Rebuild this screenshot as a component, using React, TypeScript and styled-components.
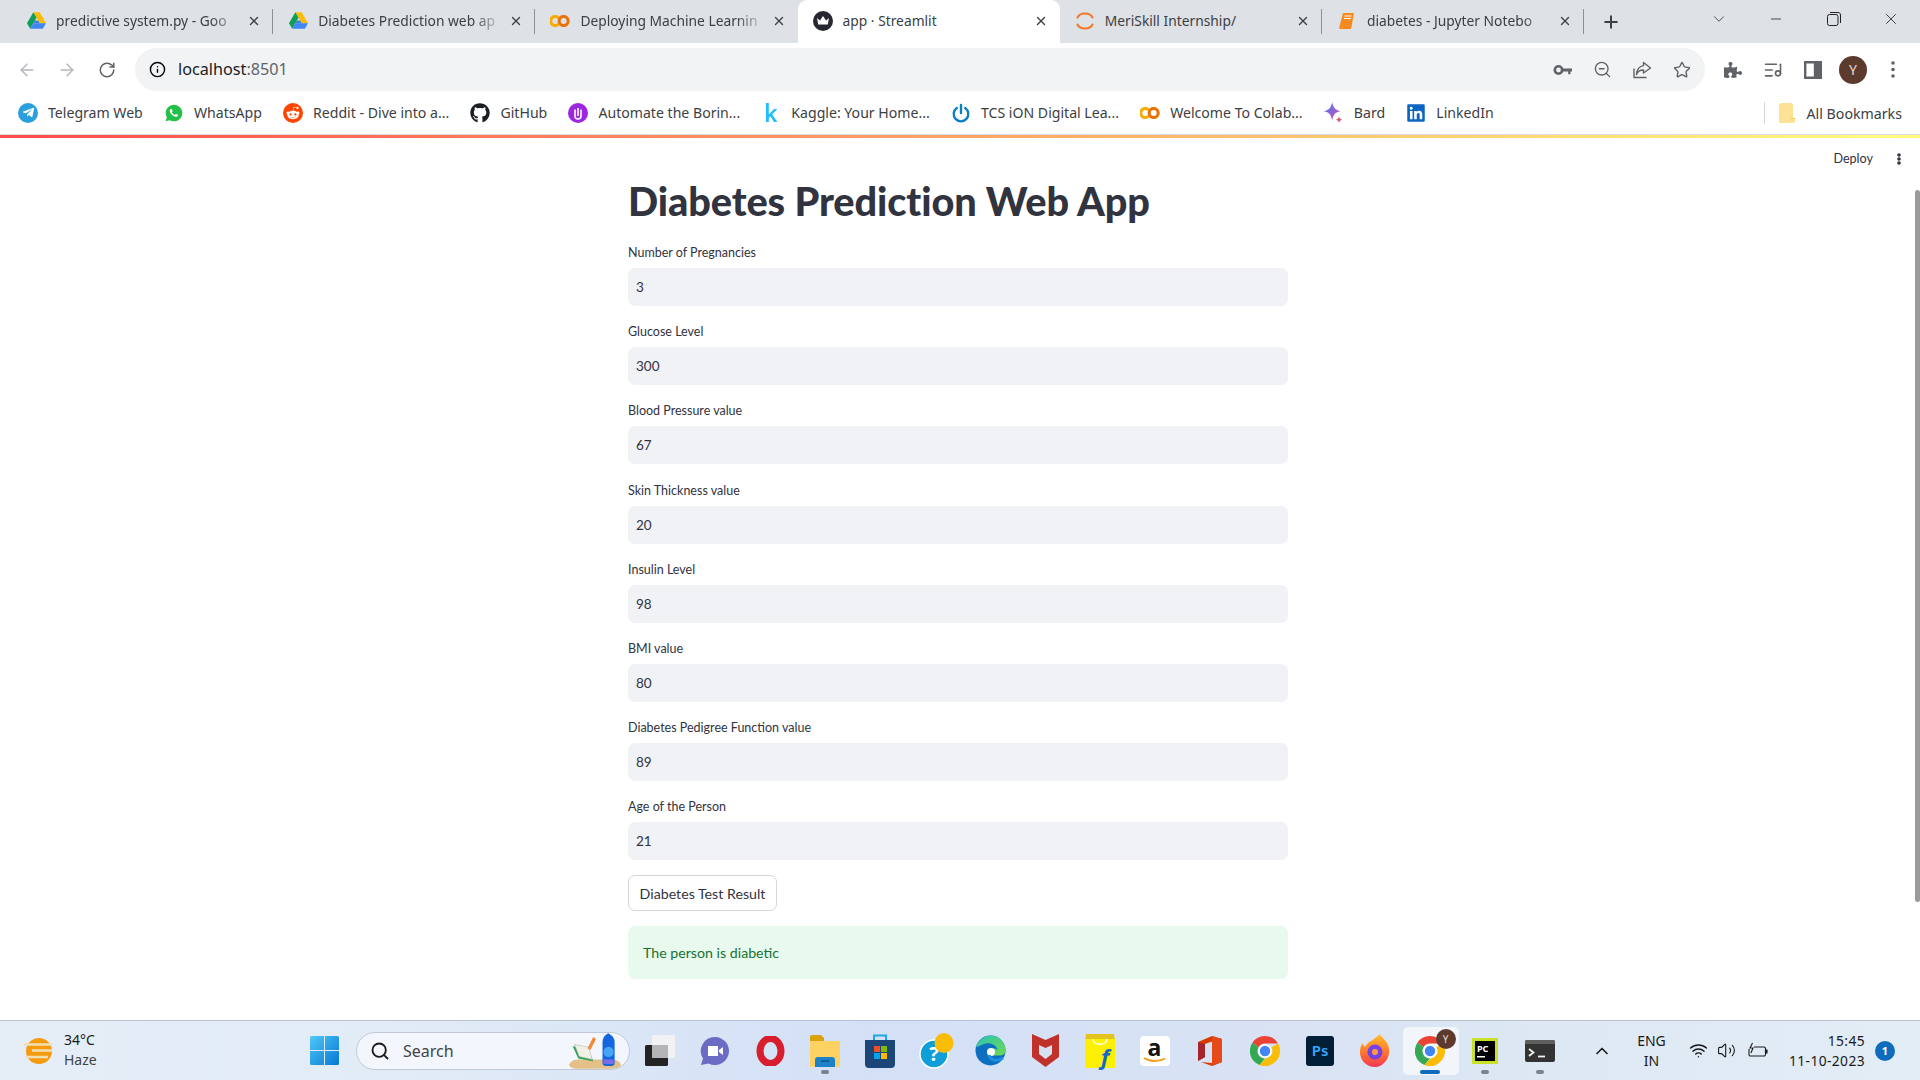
import React, { FC, ReactNode } from 'react';
import styled, { createGlobalStyle } from 'styled-components';
import { ArrowLeft, ArrowRight, Info, ListMusic, RotateCw, Search, Star, Volume2, Wifi, X, ZoomOut, ChevronDown, ChevronUp, Minus, Plus } from 'lucide-react';
import { FaGithub, FaLinkedin, FaPuzzlePiece, FaRedditAlien, FaTelegramPlane } from 'react-icons/fa';
import { RiWhatsappFill } from 'react-icons/ri';

const uiFont = `"Noto Sans", "Open Sans", sans-serif`;
const appFont = `"Lato", "Noto Sans", sans-serif`;

const GlobalStyle = createGlobalStyle`
  html, body { margin: 0; padding: 0; background: #fff; overflow: hidden; }
  * { box-sizing: border-box; }
  body { font-family: ${uiFont}; }
`;

/* favicons and small drawings */
const Drive = () => (
  <svg width="19" height="17" viewBox="0 0 24 21">
    <path d="M8 0h8l8 14h-8z" fill="#fbbc04" />
    <path d="M8 0l4 7-8 14-4-7z" fill="#0f9d58" />
    <path d="M4 21l4-7h16l-4 7z" fill="#4285f4" />
    <path d="M8 14h8l-2-3.5h-4z" fill="#3b7de0" />
  </svg>
);

const Colab = ({ size = 20 }: { size?: number }) => (
  <svg width={size} height={size * 0.6} viewBox="0 0 30 18" fill="none" strokeWidth="4.6">
    <path d="M13 4.5A6.8 6.8 0 1 0 13 13.5" stroke="#f9ab00" />
    <circle cx="20.5" cy="9" r="6.8" stroke="#e8710a" />
  </svg>
);

const Crown = () => (
  <svg width="20" height="20" viewBox="0 0 20 20">
    <circle cx="10" cy="10" r="10" fill="#262730" />
    <path d="M4 7l3 2.4L10 5l3 4.4L16 7l-1.2 6.5H5.2z" fill="#fff" />
  </svg>
);

const Spinner = () => (
  <svg width="20" height="20" viewBox="0 0 20 20" fill="none" stroke="#f37726" strokeWidth="2" strokeLinecap="round">
    <path d="M2.5 6.5C5 1.2 15 1.2 17.5 6.5" />
    <path d="M2.5 13.5C5 18.8 15 18.8 17.5 13.5" />
  </svg>
);

const Notebook = () => (
  <svg width="18" height="18" viewBox="0 0 18 18">
    <path d="M5 1h11l-2.6 14.5c-.1.8-.7 1.5-1.6 1.5H2.5c-1 0-1.4-.8-1.3-1.6z" fill="#f68a1e" />
    <path d="M6.5 4h7M6 6.5h7" stroke="#fff" strokeWidth="1" />
  </svg>
);

const Key = () => (
  <svg width="19" height="12" viewBox="0 0 19 12" fill="none">
    <circle cx="5.5" cy="6" r="3.7" stroke="#5f6368" strokeWidth="2.6" />
    <path d="M9 4.6h10v3h-1.6v2.6h-2.2V7.6H9z" fill="#5f6368" />
  </svg>
);

const ShareBox = () => (
  <svg width="20" height="20" viewBox="0 0 20 20" fill="none" stroke="#5f6368" strokeWidth="1.4" strokeLinejoin="round">
    <path d="M2 8.5V17.5H14.5" />
    <path d="M11.5 2.5L18.5 8 11.5 13V10C8 10 5.5 11.5 4.5 14.5 4.5 9.5 7.5 6 11.5 5.6z" />
  </svg>
);

const SidePanel = () => (
  <svg width="18" height="18" viewBox="0 0 18 18">
    <path d="M0 0h18v18H0zM2.4 2.4v13.2h7.4V2.4z" fill="#5f6368" fillRule="evenodd" />
  </svg>
);

const Dots = ({ color = '#5f6368', gap = 6.5 }: { color?: string; gap?: number }) => (
  <svg width="4" height={gap * 2 + 4} viewBox={`0 0 4 ${gap * 2 + 4}`} fill={color}>
    <circle cx="2" cy="2" r="1.8" />
    <circle cx="2" cy={gap + 2} r="1.8" />
    <circle cx="2" cy={gap * 2 + 2} r="1.8" />
  </svg>
);

const Restore = () => (
  <svg width="14" height="14" viewBox="0 0 14 14" fill="none" stroke="#202124" strokeWidth="1">
    <rect x="0.5" y="2.5" width="10.5" height="11" rx="2" />
    <path d="M3 .5h8c1.5 0 2.5 1 2.5 2.5v8" />
  </svg>
);

const KaggleK = () => (
  <svg width="11" height="19" viewBox="0 0 11 19">
    <path d="M0 0h2.8v11.4L8 6h3.4L6.2 11.2 11.4 19H8L4.3 13.2 2.8 14.7V19H0z" fill="#20beff" />
  </svg>
);

const PowerIcon = () => (
  <svg width="22" height="22" viewBox="0 0 22 22" fill="none" stroke="#0a7fc4" strokeWidth="2.6" strokeLinecap="round">
    <path d="M6.4 5.6a8 8 0 1 0 9.2 0" />
    <path d="M11 2v9" />
  </svg>
);

const Bard = () => (
  <svg width="22" height="24" viewBox="0 0 22 24">
    <defs>
      <linearGradient id="bardg" x1="0" y1="0" x2="1" y2="1">
        <stop offset="0" stopColor="#3f7ff0" />
        <stop offset="0.6" stopColor="#9b5fd0" />
        <stop offset="1" stopColor="#d9566a" />
      </linearGradient>
    </defs>
    <path d="M9 0c1 6 3.500 9 9 10-5.500 1-8 4-9 10-1-6-3.500-9-9-10 5.500-1 8-4 9-10z" fill="url(#bardg)" />
    <path d="M16.500 15.500c.4 2.300 1.300 3.300 3.500 3.800-2.200.5-3.100 1.500-3.500 3.800-.4-2.300-1.300-3.300-3.500-3.800 2.200-.5 3.100-1.500 3.500-3.800z" fill="#d9566a" />
  </svg>
);

const UploadBadge = () => (
  <svg width="20" height="20" viewBox="0 0 20 20" fill="none">
    <circle cx="10" cy="10" r="10" fill="#9d27e0" />
    <path d="M7 6.500v6.500a3 3 0 0 0 6 0V6.500M10 5v8" stroke="#fff" strokeWidth="1.6" />
  </svg>
);

const FolderBookmark = () => (
  <svg width="16" height="20" viewBox="0 0 16 20">
    <path d="M2 0h10c1 0 2 1 2 2v13h2v3c0 1-1 2-2 2H2c-1 0-2-1-2-2V2c0-1 1-2 2-2z" fill="#fde293" />
    <path d="M12 15.500h4" stroke="#f5c84c" strokeWidth="1" />
  </svg>
);

const Weather = () => (
  <svg width="32" height="36" viewBox="0 0 32 36">
    <circle cx="16" cy="18" r="13" fill="#f69a0e" />
    <path d="M1 11.500h28M3 24h22M9 17.500h20" stroke="#f1dfb4" strokeWidth="2.400" />
  </svg>
);

const WindowsLogo = () => (
  <svg width="29" height="29" viewBox="0 0 29 29">
    <defs>
      <linearGradient id="wing" x1="0" y1="0" x2="1" y2="1">
        <stop offset="0" stopColor="#50c8f8" />
        <stop offset="1" stopColor="#0478d4" />
      </linearGradient>
    </defs>
    <path d="M0 1.500Q0 0 1.500 0H14v14H0zM15 0h12.500Q29 0 29 1.500V14H15zM0 15h14v14H1.500Q0 29 0 27.500zM15 15h14v12.500Q29 29 27.500 29H15z" fill="url(#wing)" />
  </svg>
);

const SearchArt = () => (
  <svg width="54" height="36" viewBox="0 0 58 38">
    <path d="M0 34q2-6 10-6h36q8 0 10 6-3 4-10 4H8q-6 0-8-4z" fill="#e3c089" />
    <path d="M4 14l16 2 6 14-16-3z" fill="#2f9e58" />
    <path d="M6 12l15 3 4 13-14-3z" fill="#f2f0e4" stroke="#a9b5a9" strokeWidth=".6" />
    <path d="M20 16L26 4l3 2-6 12z" fill="#f08a34" />
    <path d="M36 10q0-7 6-10 7 3 7 10v22q0 3-3 3h-7q-3 0-3-3z" fill="#1565e0" />
    <circle cx="42.500" cy="20" r="5.500" fill="#46a6f5" />
    <path d="M37 28h11v5H37z" fill="#7a6de8" />
  </svg>
);

const TaskView = () => (
  <svg width="30" height="31" viewBox="0 0 30 31">
    <rect x="7" y="0" width="23" height="23" rx="1.500" fill="#f2f2f4" />
    <rect x="0" y="10" width="23" height="21" rx="1.500" fill="#232323" />
    <rect x="7" y="10" width="16" height="13" fill="#b5b5b7" />
  </svg>
);

const Meet = () => (
  <svg width="30" height="30" viewBox="0 0 30 30">
    <path d="M15 1a14 14 0 1 1-6.500 26.400L1 29l2-6.500A14 14 0 0 1 15 1z" fill="#6d6cc4" />
    <path d="M8 10h10v10H8z" fill="#fff" />
    <path d="M19 14l4-3v8l-4-3z" fill="#fff" />
  </svg>
);

const Opera = () => (
  <svg width="29" height="30" viewBox="0 0 29 30" fill="none">
    <ellipse cx="14.500" cy="15" rx="10.500" ry="12.500" stroke="#d81e2d" strokeWidth="7" />
  </svg>
);

const Explorer = () => (
  <svg width="30" height="32" viewBox="0 0 30 32">
    <path d="M0 2q0-2 2-2h9l3 3v5H0z" fill="#dca20b" />
    <path d="M0 6h30v26H0z" fill="#fcd262" />
    <path d="M5 25q0-3 3-3h14q3 0 3 3v7H5z" fill="#1b82c9" />
    <path d="M11 26h8" stroke="#0b4f86" strokeWidth="1.400" />
  </svg>
);

const Store = () => (
  <svg width="30" height="34" viewBox="0 0 30 34" fill="none">
    <path d="M9 6V1.500h12V6" stroke="#1ea7e8" strokeWidth="2" />
    <path d="M0 6h30v24q0 4-4 4H4q-4 0-4-4z" fill="#1d4678" />
    <path d="M9 12h6v6H9z" fill="#f25022" />
    <path d="M16 12h6v6h-6z" fill="#7fba00" />
    <path d="M9 19h6v6H9z" fill="#00a4ef" />
    <path d="M16 19h6v6h-6z" fill="#ffb900" />
  </svg>
);

const Help = () => (
  <svg width="36" height="36" viewBox="-2 0 36 36" overflow="visible">
    <circle cx="15" cy="21" r="14" fill="#0e9ed8" stroke="#fff" strokeWidth="1.500" />
    <text x="15" y="28" textAnchor="middle" fontSize="20" fontWeight="700" fontFamily="Noto Sans, sans-serif" fill="#fff">?</text>
    <ellipse cx="25" cy="10" rx="9.500" ry="10" fill="#fbbc05" />
  </svg>
);

const Edge = () => (
  <svg width="31" height="31" viewBox="0 0 31 31">
    <defs>
      <linearGradient id="edgeg" x1="0" y1="0" x2="1" y2="1">
        <stop offset="0" stopColor="#2bc4b8" />
        <stop offset="1" stopColor="#6fd84e" />
      </linearGradient>
    </defs>
    <circle cx="15.500" cy="15.500" r="15" fill="#0c6fc0" />
    <path d="M1 12C4 3 12 .5 15.500.5 24 .5 30.500 7 30.500 15.500c0 3-2.500 5-6 5H14c-2-3 1-7 5-7 2 0 3 .5 4 1.500C21 9 14 7 9 9 5 10.500 3 12 1 12z" fill="url(#edgeg)" />
    <circle cx="16" cy="17" r="4" fill="#fff" />
    <path d="M14 20c1 5 7 7 14 3" stroke="#1e90e0" strokeWidth="3" fill="none" />
  </svg>
);

const McAfee = () => (
  <svg width="27" height="33" viewBox="0 0 27 33">
    <path d="M0 0l13.500 6L27 0v23L13.500 33 0 23z" fill="#c0312b" />
    <path d="M7 11l6.500 3 6.500-3v9l-6.500 5L7 20z" fill="#d6e0f3" />
  </svg>
);

const Flipkart = () => (
  <svg width="30" height="34" viewBox="0 0 30 34" overflow="visible">
    <path d="M1 0h28l1 6H0z" fill="#e3c31e" />
    <path d="M0 5h30v29H0z" fill="#fdf000" />
    <path d="M8 5c0 7 14 7 14 0" stroke="#fff" strokeWidth="1.400" fill="none" />
    <text x="20" y="31" textAnchor="middle" fontSize="22" fontWeight="700" fontStyle="italic" fontFamily="Noto Sans, sans-serif" fill="#1467cc">f</text>
  </svg>
);

const Amazon = () => (
  <svg width="30" height="30" viewBox="0 0 30 30" overflow="visible">
    <rect width="30" height="30" rx="4" fill="#fff" />
    <text x="14.500" y="20" textAnchor="middle" fontSize="23" fontWeight="700" fontFamily="Noto Sans, sans-serif" fill="#111">a</text>
    <path d="M4 22c6 4 15 4 21 .5" stroke="#f79c1d" strokeWidth="2" fill="none" />
  </svg>
);

const Office = () => (
  <svg width="24" height="30" viewBox="0 0 24 30">
    <path d="M0 6L14 0l10 3v23l-10 4-11-4 11 1V5.500L7 8v13l-7 4z" fill="#d83b01" />
    <path d="M0 6l7 2v13l-7 4z" fill="#a4262c" />
    <path d="M14 0l10 3v23l-10 4z" fill="#e64a19" />
  </svg>
);

const Chrome = ({ size = 30 }: { size?: number }) => (
  <svg width={size} height={size} viewBox="0 0 30 30">
    <path d="M15 0a15 15 0 0 1 13 7.500H15a7.500 7.500 0 0 0-6.500 3.700L2.500 6.500A15 15 0 0 1 15 0z" fill="#ea4335" />
    <path d="M2.500 6.500l6 4.700A7.500 7.500 0 0 0 15 22.500L9.500 29A15 15 0 0 1 2.500 6.500z" fill="#34a853" />
    <path d="M28 7.500A15 15 0 0 1 9.500 29l6-6.500A7.500 7.500 0 0 0 21.500 11.200L28 7.500z" fill="#fbbc04" />
    <circle cx="15" cy="15" r="6" fill="#4285f4" stroke="#fff" strokeWidth="1.600" />
  </svg>
);

const Photoshop = () => (
  <svg width="28" height="30" viewBox="0 0 28 30">
    <rect width="28" height="30" rx="3" fill="#001e36" />
    <text x="14" y="20" textAnchor="middle" fontSize="15" fontWeight="600" fontFamily="Noto Sans, sans-serif" fill="#31a8ff">Ps</text>
  </svg>
);

const Firefox = () => (
  <svg width="30" height="33" viewBox="0 0 30 33">
    <defs>
      <linearGradient id="foxg" x1="0" y1="0" x2="0" y2="1">
        <stop offset="0" stopColor="#ffc02e" />
        <stop offset="0.6" stopColor="#ff6f2c" />
        <stop offset="1" stopColor="#f2375a" />
      </linearGradient>
    </defs>
    <path d="M20 0c1 3 6 6 8 11 4 10-3 22-13 22C6 33 0 26 0 18c0-4 1-7 3-9 0 2 1 3 2 4 2-5 9-7 15-13z" fill="url(#foxg)" />
    <circle cx="15" cy="18" r="7.500" fill="#7542e5" />
    <circle cx="15" cy="18" r="3" fill="#ff9d3c" />
  </svg>
);

const PyCharm = () => (
  <svg width="26" height="26" viewBox="0 0 26 26">
    <rect width="26" height="26" fill="#c9e12a" />
    <rect x="3" y="3" width="20" height="20" fill="#000" />
    <text x="5" y="14" fontSize="9" fontWeight="700" fontFamily="Noto Sans, sans-serif" fill="#fff">PC</text>
    <rect x="5" y="18" width="8" height="1.500" fill="#fff" />
  </svg>
);

const Terminal = () => (
  <svg width="30" height="22" viewBox="0 0 30 22" fill="none">
    <rect width="30" height="22" rx="2" fill="#333" />
    <path d="M0 2q0-2 2-2h26q2 0 2 2v2H0z" fill="#5e5e5e" />
    <path d="M4 9l4.500 3.500L4 16" stroke="#f2f2f2" strokeWidth="1.800" />
    <path d="M13 16.500h7" stroke="#f2f2f2" strokeWidth="1.800" />
  </svg>
);

const BatteryCharge = () => (
  <svg width="20" height="18" viewBox="0 0 20 18" fill="none" stroke="#1a1a1a" strokeWidth="1.100">
    <path d="M6 5h10a1.500 1.500 0 0 1 1.500 1.500v6A1.500 1.500 0 0 1 16 14H2.500A1.500 1.500 0 0 1 1 12.500V7" />
    <path d="M17.500 8h1.500v3h-1.500z" fill="#1a1a1a" />
    <path d="M4.500 1L2 6h3l-2 5" />
  </svg>
);

/* browser tabs */
const TabStrip = styled.div`
  display: flex;
  align-items: stretch;
  height: 43px;
  padding-left: 11px;
  background: #dee1e6;
`;

const Tab = styled.div<{ $active?: boolean; $divider?: boolean }>`
  position: relative;
  display: flex;
  align-items: center;
  width: 262.2px;
  padding: 0 12px 2px 15px;
  color: #3c4043;
  background: ${({ $active }) => ($active ? '#fff' : 'transparent')};
  border-radius: ${({ $active }) => ($active ? '9px 9px 0 0' : '0')};

  ${({ $divider }) => $divider && `
    &::after {
      content: '';
      position: absolute;
      right: 0;
      top: 9px;
      height: 25px;
      width: 1px;
      background: #8e9094;
    }
  `}
`;

const TabIcon = styled.span`
  display: flex;
  align-items: center;
  justify-content: center;
  width: 20px;
  margin-right: 10px;
  flex-shrink: 0;
`;

const TabTitle = styled.span<{ $fade?: boolean }>`
  flex: 1;
  min-width: 0;
  overflow: hidden;
  white-space: nowrap;
  font-size: 13.8px;
  ${({ $fade }) => $fade && `mask-image: linear-gradient(to right, #000 84%, transparent 100%);`}
`;

const TabClose = styled.span`
  display: flex;
  margin-left: 6px;
  color: #3c4043;
`;

const NewTab = styled.div`
  display: flex;
  align-items: center;
  margin-left: 17px;
  color: #3c4043;
`;

const WindowControls = styled.div`
  display: flex;
  margin-left: auto;
`;

const WindowButton = styled.div`
  display: flex;
  align-items: center;
  justify-content: center;
  width: 57.500px;
  height: 38px;
  color: #202124;
`;

/* address bar */
const Toolbar = styled.div`
  display: flex;
  align-items: center;
  height: 49px;
  padding: 5px 0 1px 7px;
  background: #fff;
`;

const IconSlot = styled.div`
  display: flex;
  align-items: center;
  justify-content: center;
  width: 40px;
  height: 40px;
  color: #5f6368;
  flex-shrink: 0;
`;

const AddressBar = styled.div`
  display: flex;
  align-items: center;
  width: 1570px;
  height: 43px;
  margin-left: 8px;
  padding: 0 3px 0 14px;
  background: #f1f3f4;
  border-radius: 22px;
`;

const Url = styled.div`
  flex: 1;
  margin-left: 12px;
  padding-bottom: 1px;
  font-size: 16.200px;
  color: #202124;

  span {
    color: #5f6368;
  }
`;

const Extensions = styled.div`
  display: flex;
  align-items: center;
  margin-left: 8px;
`;

const Avatar = styled.div<{ $size: number; $font: number }>`
  display: flex;
  align-items: center;
  justify-content: center;
  width: ${({ $size }) => $size}px;
  height: ${({ $size }) => $size}px;
  border-radius: 50%;
  background: #5d3a2e;
  color: #e8dcd6;
  font-size: ${({ $font }) => $font}px;
`;

/* bookmarks */
const BookmarkBar = styled.div`
  display: flex;
  align-items: center;
  gap: 21.200px;
  height: 43px;
  padding: 0 18px;
  background: #fff;
  border-bottom: 1px solid #dadce0;
`;

const Bookmark = styled.div`
  display: flex;
  align-items: center;
  gap: 10px;
  font-size: 14.100px;
  color: #3c4043;
  white-space: nowrap;
  padding-bottom: 1px;
`;

const BookmarkIcon = styled.span<{ $color?: string; $round?: boolean }>`
  display: flex;
  align-items: center;
  justify-content: center;
  width: 20px;
  height: 20px;
  flex-shrink: 0;
  border-radius: ${({ $round }) => ($round ? '50%' : '2px')};
  background: ${({ $color }) => $color || 'transparent'};
  color: #fff;
`;

const AllBookmarks = styled.div`
  display: flex;
  align-items: center;
  height: 22px;
  margin-left: auto;
  padding-left: 14px;
  gap: 12px;
  border-left: 1px solid #d5d7da;
  font-size: 14.200px;
  color: #3c4043;
`;

const Decoration = styled.div`
  height: 3px;
  background: linear-gradient(90deg, #ff4b4b, #fffd80);
`;

/* streamlit page */
const Page = styled.main`
  position: relative;
  height: 882px;
  padding-right: 4px;
  background: #fff;
  font-family: ${appFont};
  color: #31333f;
`;

const AppHeader = styled.div`
  position: absolute;
  top: 13px;
  right: 19px;
  display: flex;
  align-items: center;
  gap: 24px;
  font-size: 12.600px;
`;

const ScrollThumb = styled.div`
  position: absolute;
  right: 0;
  top: 52px;
  width: 5px;
  height: 712px;
  background: #9b9b9b;
  border-radius: 3px;
`;

const Content = styled.div`
  display: flex;
  flex-direction: column;
  width: 660px;
  margin: 0 auto;
  padding-top: 40px;
`;

const Title = styled.h1`
  margin: 0 0 19px;
  height: 46px;
  font-size: 39.700px;
  line-height: 46px;
  font-weight: 900;
  letter-spacing: -0.1px;
`;

const Fields = styled.div`
  display: flex;
  flex-direction: column;
  gap: 16.200px;
`;

const Field = styled.label`
  display: flex;
  flex-direction: column;
`;

const FieldLabel = styled.span`
  height: 25px;
  font-size: 12.500px;
  line-height: 20px;
`;

const FieldInput = styled.input`
  height: 38px;
  padding: 0 8px;
  border: 0;
  outline: 0;
  border-radius: 7px;
  background: #f0f2f6;
  color: #31333f;
  font-family: ${appFont};
  font-size: 13.500px;
`;

const SubmitButton = styled.button`
  align-self: flex-start;
  width: 149px;
  height: 36px;
  margin-top: 15px;
  padding: 0;
  background: #fff;
  border: 1px solid #d5d6d9;
  border-radius: 7px;
  color: #31333f;
  font-family: ${appFont};
  font-size: 14.200px;
`;

const SuccessAlert = styled.div`
  display: flex;
  align-items: center;
  height: 53px;
  margin-top: 15px;
  padding: 0 15px;
  border-radius: 7px;
  background: #e8f9ee;
  color: #177233;
  font-size: 14.200px;
`;

/* windows taskbar */
const Taskbar = styled.footer`
  display: flex;
  align-items: center;
  height: 60px;
  border-top: 1px solid #b9c3d3;
  background: linear-gradient(90deg, #e5eef7 0%, #e2ecf7 20%, #d3e0f6 45%, #d8e2f4 65%, #dde8f4 80%, #e3edf6 100%);
  color: #1a1a1a;
`;

const WeatherBlock = styled.div`
  display: flex;
  align-items: center;
  gap: 9px;
  width: 297px;
  padding-left: 23px;
`;

const WeatherText = styled.div`
  font-size: 14px;
  line-height: 20px;
  margin-top: -1px;

  small {
    display: block;
    font-size: 14px;
    color: #444;
  }
`;

const AppSlot = styled.div<{ $active?: boolean; $running?: boolean }>`
  position: relative;
  display: flex;
  align-items: center;
  justify-content: center;
  width: 55px;
  height: 48px;
  flex-shrink: 0;
  border-radius: 5px;

  ${({ $active }) => $active && `
    background: rgba(255, 255, 255, 0.65);
    box-shadow: 1px 0 0 rgba(255, 255, 255, 0.6);
  `}

  ${({ $running, $active }) => ($running || $active) && `
    &::after {
      content: '';
      position: absolute;
      bottom: 1px;
      left: 50%;
      transform: translateX(-50%);
      width: ${$active ? 20 : 8}px;
      height: 4px;
      border-radius: 2px;
      background: ${$active ? '#0f6cbd' : '#7d828b'};
    }
  `}
`;

const SearchBox = styled.div`
  display: flex;
  align-items: center;
  width: 274px;
  height: 38px;
  margin-left: 4px;
  margin-right: 2.500px;
  padding: 0 6px 0 13px;
  border-radius: 19px;
  border: 1px solid #c1c9d8;
  background: #f3f7fd;
  font-size: 16px;
  color: #444;
`;

const SearchLabel = styled.span`
  flex: 1;
  margin-left: 13px;
`;

const BadgeAvatar = styled.div`
  position: absolute;
  top: 2px;
  right: 2px;
`;

const Tray = styled.div`
  display: flex;
  align-items: center;
  margin-left: auto;
  height: 100%;
`;

const TrayIcon = styled.div<{ $width: number }>`
  display: flex;
  align-items: center;
  justify-content: center;
  width: ${({ $width }) => $width}px;
  color: #1a1a1a;
`;

const Language = styled.div`
  width: 62px;
  margin: 0 2.500px 0 5px;
  text-align: center;
  font-size: 14px;
  line-height: 20px;
`;

const Clock = styled.div`
  margin-left: 14px;
  text-align: right;
  font-size: 13.800px;
  letter-spacing: 0.4px;
  line-height: 20px;
`;

const NotificationBadge = styled.div`
  display: flex;
  align-items: center;
  justify-content: center;
  width: 20px;
  height: 20px;
  margin: 0 25px 0 10px;
  border-radius: 50%;
  background: #0f6cbd;
  color: #fff;
  font-size: 11px;
  font-weight: 700;
`;

interface TabData {
  icon: ReactNode;
  title: string;
  fade?: boolean;
  active?: boolean;
  divider?: boolean;
}

const tabs: TabData[] = [
  { icon: <Drive />, title: 'predictive system.py - Goo', fade: true, divider: true },
  { icon: <Drive />, title: 'Diabetes Prediction web ap', fade: true, divider: true },
  { icon: <Colab />, title: 'Deploying Machine Learnin', fade: true },
  { icon: <Crown />, title: 'app · Streamlit', active: true },
  { icon: <Spinner />, title: 'MeriSkill Internship/', divider: true },
  { icon: <Notebook />, title: 'diabetes - Jupyter Notebo', fade: true, divider: true },
];

const bookmarks: { icon: ReactNode; label: string }[] = [
  { icon: <BookmarkIcon $color="#2a9fdc" $round><FaTelegramPlane size={13} /></BookmarkIcon>, label: 'Telegram Web' },
  { icon: <BookmarkIcon><RiWhatsappFill size={22} color="#25c04a" /></BookmarkIcon>, label: 'WhatsApp' },
  { icon: <BookmarkIcon $color="#ff4500" $round><FaRedditAlien size={14} /></BookmarkIcon>, label: 'Reddit - Dive into a...' },
  { icon: <BookmarkIcon><FaGithub size={20} color="#1b1f23" /></BookmarkIcon>, label: 'GitHub' },
  { icon: <BookmarkIcon><UploadBadge /></BookmarkIcon>, label: 'Automate the Borin...' },
  { icon: <BookmarkIcon><KaggleK /></BookmarkIcon>, label: 'Kaggle: Your Home...' },
  { icon: <BookmarkIcon><PowerIcon /></BookmarkIcon>, label: 'TCS iON Digital Lea...' },
  { icon: <BookmarkIcon><Colab /></BookmarkIcon>, label: 'Welcome To Colab...' },
  { icon: <BookmarkIcon><Bard /></BookmarkIcon>, label: 'Bard' },
  { icon: <BookmarkIcon><FaLinkedin size={20} color="#0a66c2" /></BookmarkIcon>, label: 'LinkedIn' },
];

const fields = [
  { label: 'Number of Pregnancies', value: '3' },
  { label: 'Glucose Level', value: '300' },
  { label: 'Blood Pressure value', value: '67' },
  { label: 'Skin Thickness value', value: '20' },
  { label: 'Insulin Level', value: '98' },
  { label: 'BMI value', value: '80' },
  { label: 'Diabetes Pedigree Function value', value: '89' },
  { label: 'Age of the Person', value: '21' },
];

const pinned: { icon: ReactNode; running?: boolean }[] = [
  { icon: <TaskView /> },
  { icon: <Meet /> },
  { icon: <Opera /> },
  { icon: <Explorer />, running: true },
  { icon: <Store /> },
  { icon: <Help /> },
  { icon: <Edge /> },
  { icon: <McAfee /> },
  { icon: <Flipkart /> },
  { icon: <Amazon /> },
  { icon: <Office /> },
  { icon: <Chrome /> },
  { icon: <Photoshop /> },
  { icon: <Firefox /> },
];

const App: FC = () => (
  <>
    <GlobalStyle />
    <TabStrip>
      {tabs.map((tab) => (
        <Tab key={tab.title} $active={tab.active} $divider={tab.divider}>
          <TabIcon>{tab.icon}</TabIcon>
          <TabTitle $fade={tab.fade}>{tab.title}</TabTitle>
          <TabClose><X size={14} strokeWidth={2.4} /></TabClose>
        </Tab>
      ))}
      <NewTab><Plus size={20} strokeWidth={2.4} /></NewTab>
      <WindowControls>
        <WindowButton><ChevronDown size={18} strokeWidth={1} /></WindowButton>
        <WindowButton><Minus size={16} strokeWidth={1.2} /></WindowButton>
        <WindowButton><Restore /></WindowButton>
        <WindowButton><X size={18} strokeWidth={1.1} /></WindowButton>
      </WindowControls>
    </TabStrip>

    <Toolbar>
      <IconSlot><ArrowLeft size={20} color="#b4b7bb" strokeWidth={1.8} /></IconSlot>
      <IconSlot><ArrowRight size={20} color="#b4b7bb" strokeWidth={1.8} /></IconSlot>
      <IconSlot><RotateCw size={18} strokeWidth={2} /></IconSlot>
      <AddressBar>
        <Info size={17} strokeWidth={2} />
        <Url>localhost<span>:8501</span></Url>
        <IconSlot><Key /></IconSlot>
        <IconSlot><ZoomOut size={19} strokeWidth={1.7} /></IconSlot>
        <IconSlot><ShareBox /></IconSlot>
        <IconSlot><Star size={18} strokeWidth={1.9} /></IconSlot>
      </AddressBar>
      <Extensions>
        <IconSlot><FaPuzzlePiece size={18} /></IconSlot>
        <IconSlot><ListMusic size={20} strokeWidth={1.9} /></IconSlot>
        <IconSlot><SidePanel /></IconSlot>
        <IconSlot><Avatar $size={28} $font={14}>Y</Avatar></IconSlot>
        <IconSlot><Dots /></IconSlot>
      </Extensions>
    </Toolbar>

    <BookmarkBar>
      {bookmarks.map((item) => (
        <Bookmark key={item.label}>
          {item.icon}
          {item.label}
        </Bookmark>
      ))}
      <AllBookmarks>
        <FolderBookmark />
        All Bookmarks
      </AllBookmarks>
    </BookmarkBar>
    <Decoration />

    <Page>
      <AppHeader>
        Deploy
        <Dots color="#31333f" gap={4} />
      </AppHeader>
      <ScrollThumb />
      <Content>
        <Title>Diabetes Prediction Web App</Title>
        <Fields>
          {fields.map((field) => (
            <Field key={field.label}>
              <FieldLabel>{field.label}</FieldLabel>
              <FieldInput defaultValue={field.value} />
            </Field>
          ))}
        </Fields>
        <SubmitButton>Diabetes Test Result</SubmitButton>
        <SuccessAlert>The person is diabetic</SuccessAlert>
      </Content>
    </Page>

    <Taskbar>
      <WeatherBlock>
        <Weather />
        <WeatherText>
          34°C
          <small>Haze</small>
        </WeatherText>
      </WeatherBlock>
      <AppSlot><WindowsLogo /></AppSlot>
      <SearchBox>
        <Search size={20} strokeWidth={2.2} color="#1a1a1a" />
        <SearchLabel>Search</SearchLabel>
        <SearchArt />
      </SearchBox>
      {pinned.map((app, index) => (
        <AppSlot key={index} $running={app.running}>{app.icon}</AppSlot>
      ))}
      <AppSlot $active>
        <Chrome />
        <BadgeAvatar><Avatar $size={20} $font={10}>Y</Avatar></BadgeAvatar>
      </AppSlot>
      <AppSlot $running><PyCharm /></AppSlot>
      <AppSlot $running><Terminal /></AppSlot>
      <Tray>
        <TrayIcon $width={26}><ChevronUp size={20} strokeWidth={2} /></TrayIcon>
        <Language>ENG<br />IN</Language>
        <TrayIcon $width={28}><Wifi size={19} strokeWidth={1.8} /></TrayIcon>
        <TrayIcon $width={28}><Volume2 size={19} strokeWidth={1.4} /></TrayIcon>
        <TrayIcon $width={34}><BatteryCharge /></TrayIcon>
        <Clock>15:45<br />11-10-2023</Clock>
        <NotificationBadge>1</NotificationBadge>
      </Tray>
    </Taskbar>
  </>
);

export default App;
